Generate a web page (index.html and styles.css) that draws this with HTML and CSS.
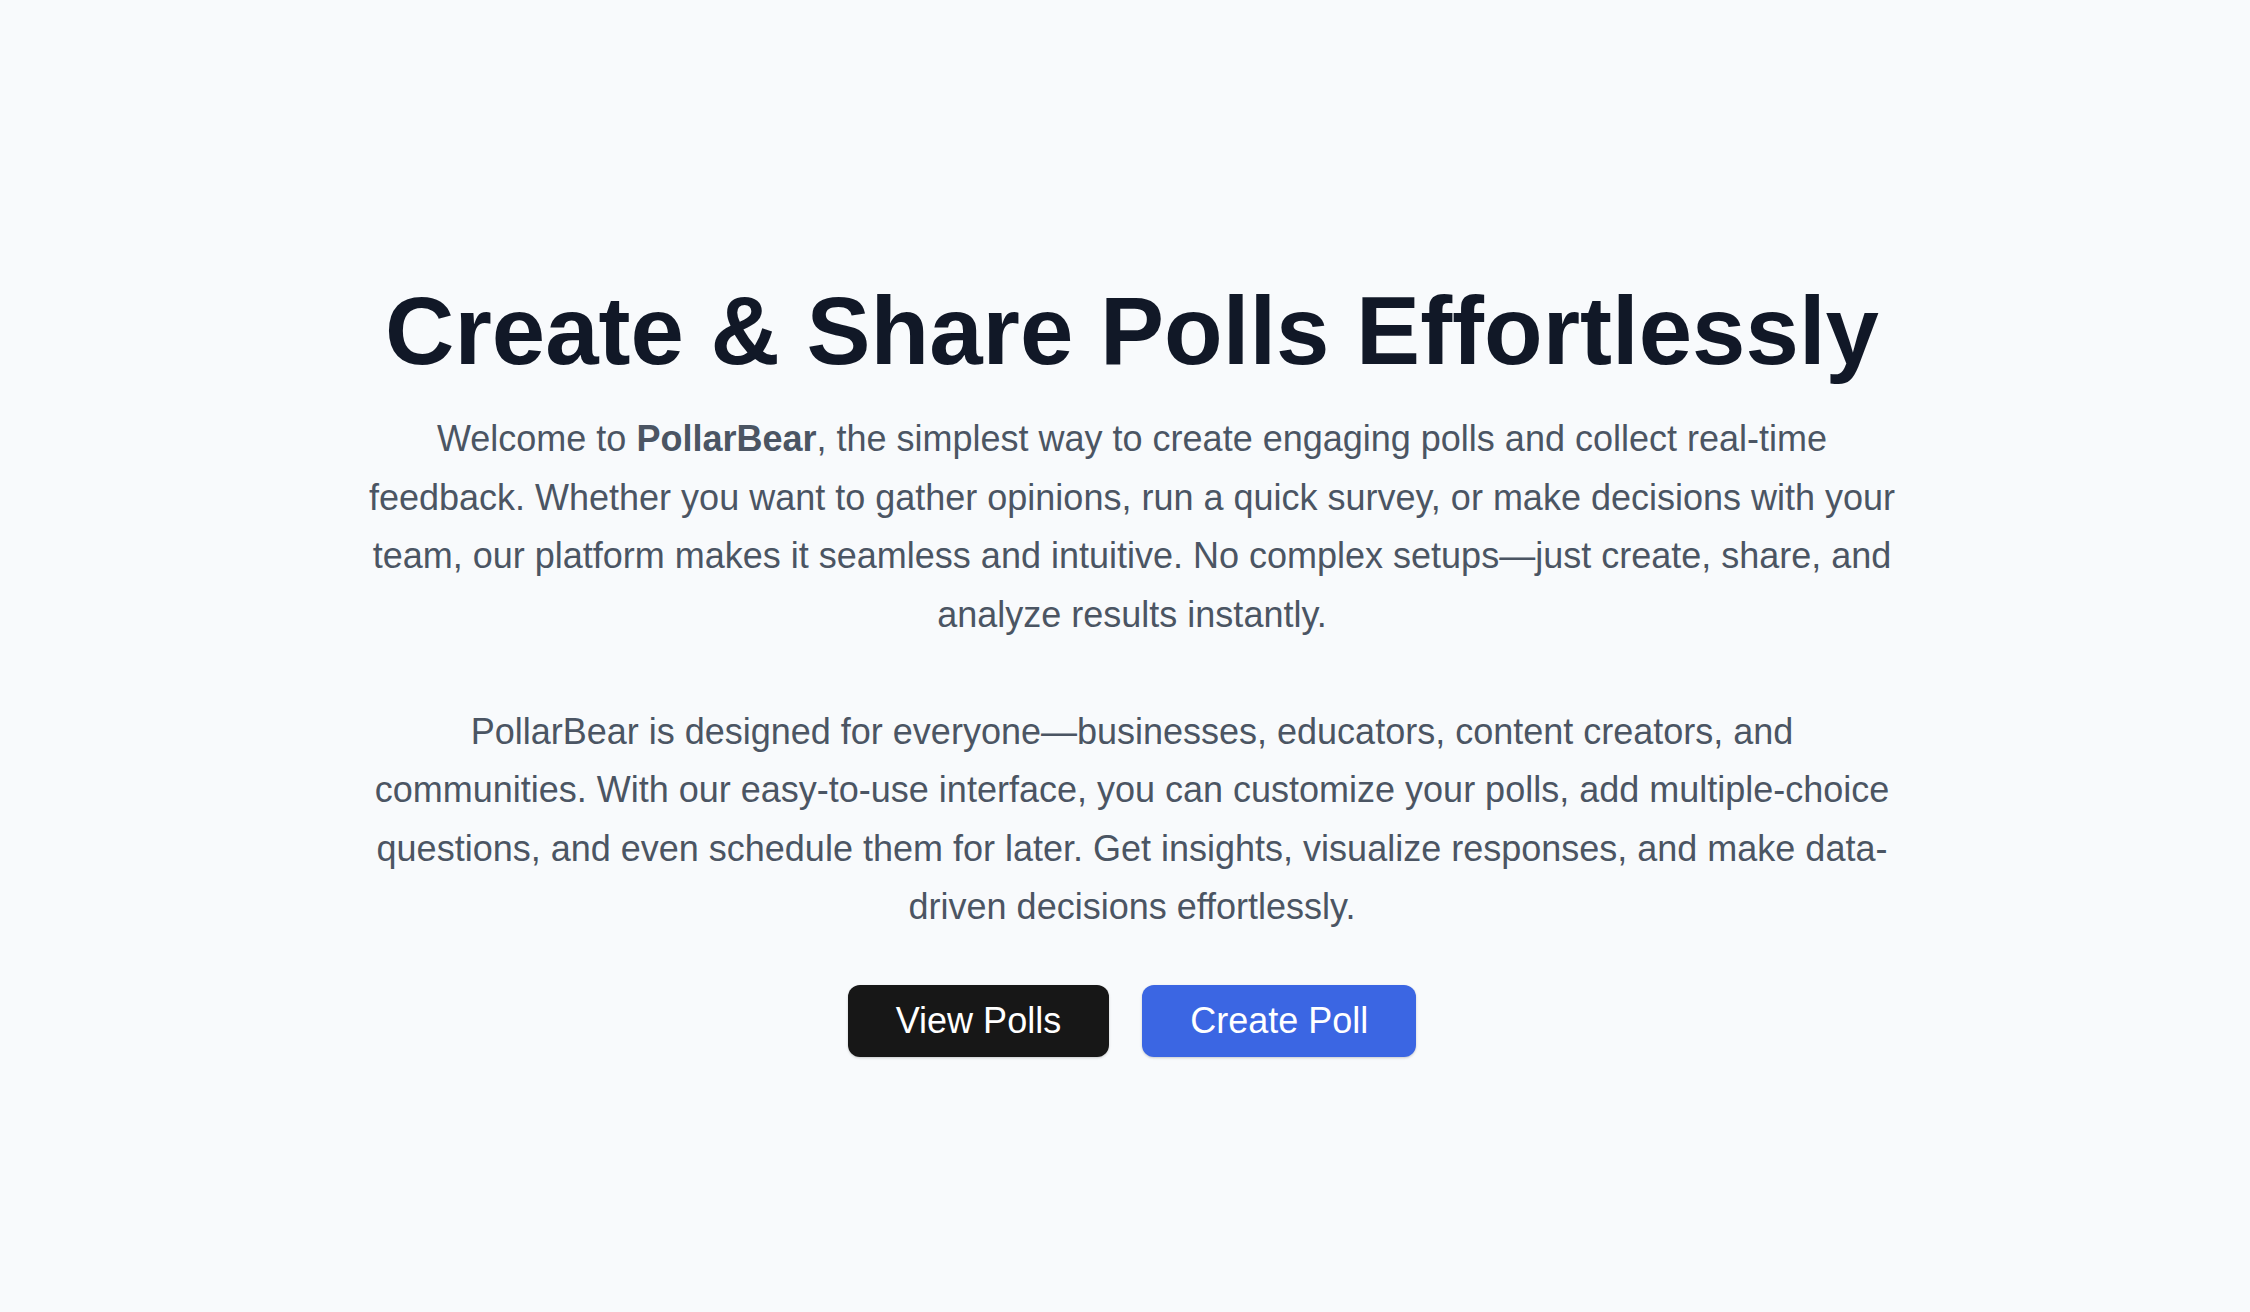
FILE: index.html
```html
<!DOCTYPE html>
<html lang="en">
<head>
<meta charset="utf-8">
<title>PollarBear</title>
<link rel="stylesheet" href="styles.css">
</head>
<body>
<main class="hero">
  <h1 class="hero-title">Create &amp; Share Polls Effortlessly</h1>
  <p class="hero-text">Welcome to <strong>PollarBear</strong>, the simplest way to create engaging polls and collect real-time feedback. Whether you want to gather opinions, run a quick survey, or make decisions with your team, our platform makes it seamless and intuitive. No complex setups—just create, share, and analyze results instantly.<br><br>PollarBear is designed for everyone—businesses, educators, content creators, and communities. With our easy-to-use interface, you can customize your polls, add multiple-choice questions, and even schedule them for later. Get insights, visualize responses, and make data-driven decisions effortlessly.</p>
  <div class="hero-actions">
    <a class="btn btn-dark" href="#">View Polls</a>
    <a class="btn btn-blue" href="#">Create Poll</a>
  </div>
</main>
</body>
</html>
```
FILE: styles.css
```css
* { box-sizing: border-box; }
html, body { margin: 0; padding: 0; }
body {
  background: #f8fafc;
  font-family: "Liberation Sans", Arial, sans-serif;
}
.hero {
  min-height: 100vh;
  display: flex;
  flex-direction: column;
  align-items: center;
  justify-content: center;
  padding: 28px 0 0 14px;
  text-align: center;
}
.hero-title {
  margin: 0;
  font-size: 96px;
  line-height: 1;
  font-weight: 700;
  color: #111827;
}
.hero-text {
  margin: 31px 0 0;
  max-width: 1536px;
  font-size: 36px;
  line-height: 58.5px;
  color: #4b5563;
}
.hero-text strong { font-weight: 700; }
.hero-actions {
  margin-top: 48px;
  display: flex;
  gap: 33px;
}
.btn {
  display: inline-block;
  padding: 18px 48px;
  font-size: 36px;
  line-height: 36px;
  border-radius: 12px;
  color: #ffffff;
  text-decoration: none;
  box-shadow: 0 1px 3px rgba(0,0,0,0.12), 0 1px 2px rgba(0,0,0,0.08);
}
.btn-dark { background: #171717; }
.btn-blue { background: #3b66e3; }
```
